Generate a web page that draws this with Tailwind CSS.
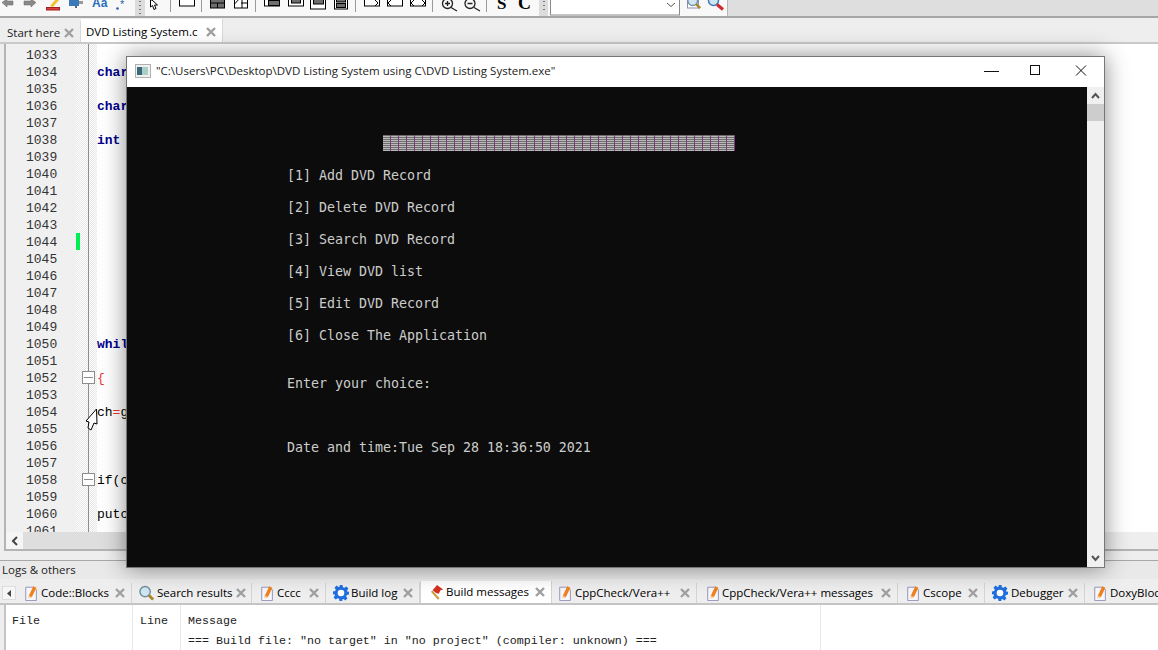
<!DOCTYPE html>
<html lang="en">
<head>
    <meta charset="UTF-8">
    <title>DVD Listing System.c - Code::Blocks</title>
    <script src="https://cdn.jsdelivr.net/npm/@tailwindcss/browser@4"></script>
</head>
<body class="relative w-[1158px] h-[650px] overflow-hidden bg-[#eeeeee] font-['Open_Sans',sans-serif] text-[11.5px] text-black">

    <!-- shared icons -->
    <svg class="hidden">
        <symbol id="close" viewBox="0 0 10 10">
            <path d="M1 1 9 9M9 1 1 9" stroke="#a0a0a0" stroke-width="2.400" fill="none"/>
        </symbol>
        <symbol id="doc" viewBox="0 0 14 18">
            <path d="M.5 2.500h9l3 3v12H.5z" fill="#f6f6fb" stroke="#8d8db5"/>
            <path d="M4 12 9 1.500l3.500 1.500-5 10.500L4 15z" fill="#f0801c"/>
            <path d="M4 12v3l3.500-1.500z" fill="#f7d9a8"/>
        </symbol>
        <symbol id="gear" viewBox="0 0 16 16">
            <path d="M6.500 0h3l.4 2.200 1.500.6L13.300 1.500l2.100 2.100-1.300 1.900.6 1.500L16 6.500v3l-2.200.4-.6 1.500 1.300 1.900-2.100 2.100-1.900-1.300-1.500.6L9.500 16h-3l-.4-2.200-1.500-.6-1.900 1.300L.6 12.400l1.300-1.900-.6-1.500L0 9.500v-3l2.200-.4.6-1.500L1.500 2.700 3.600.6l1.900 1.300 1.500-.6z" fill="#1f6fe0"/>
            <circle cx="8" cy="8" r="3.300" fill="#fff"/>
        </symbol>
        <symbol id="lens" viewBox="0 0 16 16">
            <circle cx="6.500" cy="6.500" r="5.500" fill="#cfe6f2" stroke="#6f8f9f" stroke-width="1.500"/>
            <path d="M10.500 10.500 15 15" stroke="#a8872a" stroke-width="3"/>
        </symbol>
        <symbol id="flag" viewBox="0 0 16 18">
            <path d="M3 7 8 1l7 5-3 1-2 4-3-1z" fill="#d5301f"/>
            <path d="M2 8l8 9" stroke="#c8a040" stroke-width="2.500"/>
        </symbol>
    </svg>

    <!-- toolbar, the icons are cut off by the top of the picture -->
    <div class="h-[18px] flex border-b-2 border-[#a6a6a6] bg-[#dedede]">
        <div class="w-[728px] h-[16px] bg-[#f8f8f8] border-r border-[#b8b8b8]">
            <svg width="728" height="16" viewBox="0 0 728 16">
                <path d="M2 2.500 7-1v2h6v4H7v2z" fill="#8a8a8a" stroke="#666" stroke-width=".5"/>
                <path d="M36 2.500 31-1v2h-7v4h7v2z" fill="#8a8a8a" stroke="#666" stroke-width=".5"/>
                <path d="M50 6 55 0h4l-6 7z" fill="#f2c230"/>
                <rect x="46.500" y="7.500" width="13" height="2.500" fill="#e04040" stroke="#a02020"/>
                <rect x="69" y="0" width="10" height="6" fill="#3a7ab8"/>
                <rect x="79" y="1" width="4" height="3" fill="#999"/>
                <path d="M76 6v2" stroke="#666" stroke-width="2"/>
                <text x="92" y="7" font-family="Liberation Sans" font-size="12" font-weight="bold" fill="#2a6fb8">Aa</text>
                <circle cx="117.500" cy="8.500" r="1.300" fill="#2a5fa8"/>
                <text x="120" y="8" font-family="Liberation Sans" font-size="11" fill="#2a5fa8">*</text>
                <rect x="135" y="0" width="10" height="16" fill="#dcdcdc"/>
                <path d="M140 1v1M140 5v1M140 9v1M140 13v1" stroke="#555" stroke-width="1.500"/>
                <path d="M150.500 0 150.500 7 152.500 5.500 154 9.500 156 8.500 154.500 5 157.500 5 152 0z" fill="#fff" stroke="#000"/>
                <path d="M170.500 0v12M201.500 0v12M255.500 0v12M355.500 0v12M432.500 0v12M486.500 0v12" stroke="#9a9a9a"/>
                <rect x="179.500" y="-4" width="15" height="10" fill="#fff" stroke="#000"/>
                <g stroke="#000" fill="#6e6e6e">
                    <rect x="210.500" y="-3" width="14" height="11"/>
                    <path d="M210.500 3h14M217.500 3v5" fill="none"/>
                    <rect x="234.500" y="-3" width="13" height="11" fill="#fff"/>
                    <path d="M234.500 4 241 -3h1v11M241 3h7" fill="none"/>
                    <rect x="264.500" y="-4" width="15" height="10" fill="#fff"/>
                    <rect x="268.500" y="0.500" width="11" height="5"/>
                    <rect x="288.500" y="-4" width="15" height="10" fill="#fff"/>
                    <rect x="291.500" y="-4" width="9" height="7"/>
                    <rect x="310.500" y="-4" width="15" height="13" fill="#fff"/>
                    <rect x="313.500" y="-2" width="10" height="6"/>
                    <rect x="334.500" y="-4" width="13" height="13" fill="#fff"/>
                    <rect x="336.500" y="-2" width="9" height="4"/>
                    <rect x="336.500" y="3.500" width="9" height="4"/>
                    <rect x="364.500" y="-4" width="15" height="10" fill="#fff"/>
                    <path d="M375 0l3 3-3 3" fill="none"/>
                    <rect x="387.500" y="-4" width="15" height="10" fill="#fff"/>
                    <path d="M391 0l-3 3 3 3" fill="none"/>
                    <rect x="410.500" y="-4" width="15" height="10" fill="#fff"/>
                    <path d="M414 0l-3 3 3 3M422 0l3 3-3 3" fill="none"/>
                </g>
                <g fill="none" stroke="#222" stroke-width="1.300">
                    <circle cx="447.500" cy="3.500" r="5"/>
                    <path d="M451 7.500 457 11M445 3.500h5M447.500 1v5"/>
                    <circle cx="470" cy="3.500" r="5"/>
                    <path d="M474 7.500 480 11M467.500 3.500h5"/>
                </g>
                <text x="497" y="9" font-family="Liberation Serif" font-size="17" font-weight="bold">S</text>
                <text x="518" y="9" font-family="Liberation Serif" font-size="18" font-weight="bold">C</text>
                <rect x="539" y="0" width="9" height="16" fill="#dcdcdc"/>
                <path d="M544 1v1M544 5v1M544 9v1" stroke="#555" stroke-width="1.500"/>
                <rect x="550.500" y="-3" width="129" height="18" fill="#fff" stroke="#8a8a8a"/>
                <path d="M667 3l4 3.500 4-3.500" fill="none" stroke="#555"/>
                <rect x="687.500" y="-3" width="11" height="11" fill="#fff" stroke="#8d8db5"/>
                <use href="#lens" x="687" y="-5" width="14" height="14"/>
                <circle cx="713.500" cy="0.500" r="5" fill="#cfe6f2" stroke="#3a7ab8" stroke-width="1.500"/>
                <path d="M717 4.500l6 5" stroke="#d02828" stroke-width="3"/>
            </svg>
        </div>
    </div>

    <!-- editor tabs -->
    <div class="h-[26px] pl-[3px] flex items-end border-b-2 border-[#c9c9c9]">
        <div class="w-[78px] h-[21px] pl-1 pr-[6px] pt-[2px] flex items-center justify-between border-r border-[#d8d8d8] text-[#222]">
            <span>Start here</span>
            <svg class="w-[10px] h-[10px] shrink-0"><use href="#close"/></svg>
        </div>
        <div class="w-[142px] h-[23px] pl-[5px] pr-[6px] pt-[2px] flex items-center justify-between bg-white border-r border-[#d8d8d8]">
            <span>DVD Listing System.c</span>
            <svg class="w-[10px] h-[10px] shrink-0"><use href="#close"/></svg>
        </div>
    </div>

    <!-- code editor -->
    <div class="h-[507px] ml-1 flex flex-col bg-white border-l-2 border-b-2 border-[#b4b4b4]">
        <div class="relative h-[488px] flex overflow-hidden font-['Liberation_Mono',monospace] text-[13px] leading-[17px]">
            <pre class="w-[70px] pt-[3px] pl-5 bg-[#f0f0f0] text-[#333] font-['Liberation_Mono',monospace]">1033
1034
1035
1036
1037
1038
1039
1040
1041
1042
1043
1044
1045
1046
1047
1048
1049
1050
1051
1052
1053
1054
1055
1056
1057
1058
1059
1060
1061</pre>
            <div class="relative w-[21px] bg-[repeating-conic-gradient(#e6e6e6_0_25%,#ffffff_0_50%)] bg-[length:2px_2px]">
                <div class="absolute left-0 top-[189px] w-1 h-[17px] bg-[#00ee55]"></div>
                <div class="absolute left-3 top-0 bottom-0 w-px bg-[#8c8c8c]"></div>
                <div class="absolute left-[6px] top-[327px] w-[13px] h-[13px] border border-[#8c8c8c] bg-white flex items-center justify-center"><div class="w-[9px] h-px bg-[#8c8c8c]"></div></div>
                <div class="absolute left-[6px] top-[429px] w-[13px] h-[13px] border border-[#8c8c8c] bg-white flex items-center justify-center"><div class="w-[9px] h-px bg-[#8c8c8c]"></div></div>
            </div>
            <pre class="flex-1 pt-[3px] font-['Liberation_Mono',monospace]">

<b class="text-[#00008b]">char</b>

<b class="text-[#00008b]">char</b>

<b class="text-[#00008b]">int</b>











<b class="text-[#00008b]">whil</b>

<span class="text-[#f03030]">{</span>

ch<span class="text-[#f03030]">=</span>g



if(c

putc</pre>
            <!-- mouse pointer -->
            <svg class="absolute left-[79px] top-[364px]" width="14" height="24" viewBox="0 0 14 24">
                <path d="M11.500 1 1 13l3 1-1 6 3 2 3-7 3 1z" fill="#fff" stroke="#000"/>
            </svg>
        </div>
        <div class="h-[17px] flex bg-[#eeeeee]">
            <div class="w-[17px] flex items-center justify-center bg-[#f5f5f5]">
                <svg width="8" height="10" viewBox="0 0 8 10"><path d="M6 1 2 5l4 4" fill="none" stroke="#444" stroke-width="2"/></svg>
            </div>
            <div class="w-[980px] bg-[#dedede]"></div>
        </div>
    </div>

    <!-- sash and logs caption -->
    <div class="h-[10px] border-b border-[#a8a8a8]"></div>
    <div class="h-[18px] pl-[2px] flex items-center text-[#222] bg-[#e9e9e9]">Logs &amp; others</div>

    <!-- logs tabs -->
    <div class="h-[26px] flex items-end border-b-2 border-[#c4c4c4] bg-[#eeeeee] overflow-hidden whitespace-nowrap">
        <div class="w-[22px] h-[20px] flex items-center shrink-0">
            <div class="ml-[2px] w-[14px] h-[14px] flex items-center justify-center bg-[#f6f6f6] border border-[#dddddd]">
                <svg width="5" height="7" viewBox="0 0 5 7"><path d="M4 0v7L0 3.500z" fill="#444"/></svg>
            </div>
        </div>
        <div class="w-[110px] h-[20px] pl-[3px] pr-[6px] flex items-center gap-[3px] border-r border-[#d4d4d4] shrink-0">
            <svg class="w-[13px] h-4 shrink-0"><use href="#doc"/></svg><span class="flex-1">Code::Blocks</span>
            <svg class="w-[10px] h-[10px] shrink-0"><use href="#close"/></svg>
        </div>
        <div class="w-[120px] h-[20px] pl-[7px] pr-[6px] flex items-center gap-[3px] border-r border-[#d4d4d4] shrink-0">
            <svg class="w-[15px] h-4 shrink-0"><use href="#lens"/></svg><span class="flex-1">Search results</span>
            <svg class="w-[10px] h-[10px] shrink-0"><use href="#close"/></svg>
        </div>
        <div class="w-[74px] h-[20px] pl-[9px] pr-[6px] flex items-center gap-[3px] border-r border-[#d4d4d4] shrink-0">
            <svg class="w-[13px] h-4 shrink-0"><use href="#doc"/></svg><span class="flex-1">Cccc</span>
            <svg class="w-[10px] h-[10px] shrink-0"><use href="#close"/></svg>
        </div>
        <div class="w-[94px] h-[20px] pl-[7px] pr-[6px] flex items-center gap-[2px] border-r border-[#d4d4d4] shrink-0">
            <svg class="w-4 h-4 shrink-0"><use href="#gear"/></svg><span class="flex-1">Build log</span>
            <svg class="w-[10px] h-[10px] shrink-0"><use href="#close"/></svg>
        </div>
        <div class="w-[132px] h-[22px] pl-[9px] pr-[6px] flex items-center gap-[2px] bg-white border-x border-[#d4d4d4] shrink-0">
            <svg class="w-[14px] h-4 shrink-0"><use href="#flag"/></svg><span class="flex-1">Build messages</span>
            <svg class="w-[10px] h-[10px] shrink-0"><use href="#close"/></svg>
        </div>
        <div class="w-[145px] h-[20px] pl-[7px] pr-[6px] flex items-center gap-[3px] border-r border-[#d4d4d4] shrink-0">
            <svg class="w-[13px] h-4 shrink-0"><use href="#doc"/></svg><span class="flex-1">CppCheck/Vera++</span>
            <svg class="w-[10px] h-[10px] shrink-0"><use href="#close"/></svg>
        </div>
        <div class="w-[201px] h-[20px] pl-[10px] pr-[6px] flex items-center gap-[2px] border-r border-[#d4d4d4] shrink-0">
            <svg class="w-[13px] h-4 shrink-0"><use href="#doc"/></svg><span class="flex-1">CppCheck/Vera++ messages</span>
            <svg class="w-[10px] h-[10px] shrink-0"><use href="#close"/></svg>
        </div>
        <div class="w-[87px] h-[20px] pl-[9px] pr-[6px] flex items-center gap-[3px] border-r border-[#d4d4d4] shrink-0">
            <svg class="w-[13px] h-4 shrink-0"><use href="#doc"/></svg><span class="flex-1">Cscope</span>
            <svg class="w-[10px] h-[10px] shrink-0"><use href="#close"/></svg>
        </div>
        <div class="w-[100px] h-[20px] pl-[7px] pr-[6px] flex items-center gap-[3px] border-r border-[#d4d4d4] shrink-0">
            <svg class="w-4 h-4 shrink-0"><use href="#gear"/></svg><span class="flex-1">Debugger</span>
            <svg class="w-[10px] h-[10px] shrink-0"><use href="#close"/></svg>
        </div>
        <div class="w-[90px] h-[20px] pl-[9px] flex items-center gap-[3px] shrink-0">
            <svg class="w-[13px] h-4 shrink-0"><use href="#doc"/></svg><span>DoxyBlocks</span>
        </div>
    </div>

    <!-- build messages list -->
    <div class="h-[45px] ml-1 flex bg-white border-l-2 border-[#c4c4c4] font-['Liberation_Mono',monospace] text-[11.67px] leading-[20px] text-[#222] overflow-hidden">
        <div class="w-[127px] pl-[6px] pt-[6px] border-r border-[#e8e8e8]">File</div>
        <div class="w-[48px] pl-[7px] pt-[6px] border-r border-[#e8e8e8]">Line</div>
        <div class="w-[640px] pl-[7px] pt-[6px] border-r border-[#e8e8e8] whitespace-pre">Message
=== Build file: "no target" in "no project" (compiler: unknown) ===</div>
    </div>

    <!-- console window floats over the IDE -->
    <div class="absolute left-[126px] top-[56px] w-[979px] h-[512px] flex flex-col border border-[#777777] bg-white shadow-[0_0_22px_rgba(0,0,0,0.45)]">
        <div class="h-[30px] shrink-0 pb-[2px] flex items-center">
            <svg class="ml-[8px]" width="16" height="14" viewBox="0 0 16 14">
                <rect x="0.500" y="0.500" width="15" height="13" fill="#f0f0f0" stroke="#b0b0b0"/>
                <rect x="2" y="3" width="5" height="8" fill="#3a6a7a"/>
                <rect x="7" y="3" width="6" height="8" fill="#a8d0c8"/>
            </svg>
            <span class="ml-[5px] flex-1 text-[#222]">"C:\Users\PC\Desktop\DVD Listing System using C\DVD Listing System.exe"</span>
            <svg class="mr-[14px]" width="106" height="14" viewBox="0 0 106 14">
                <path d="M0 7.500h15" stroke="#111"/>
                <rect x="46.500" y="1.500" width="9" height="9" fill="none" stroke="#111"/>
                <path d="M92 1.500 102 11.500M102 1.500 92 11.500" stroke="#111" fill="none"/>
            </svg>
        </div>
        <div class="flex-1 flex min-h-0">
            <div class="flex-1 bg-[#0c0c0c] text-[#cccccc] font-['DejaVu_Sans_Mono',monospace] text-[13.29px] leading-[16px] pl-[160px] overflow-hidden">
                <div class="mt-[48px] mb-[17px] ml-[96px] w-[352px] h-4 bg-[repeating-linear-gradient(90deg,#0000_0_7px,#7a3a7a_7px_8px),repeating-linear-gradient(0deg,#bcbcbc_0_1px,#6c6c6c_1px_2px)]"></div>
                <pre class="font-['DejaVu_Sans_Mono',monospace]">[1] Add DVD Record

[2] Delete DVD Record

[3] Search DVD Record

[4] View DVD list

[5] Edit DVD Record

[6] Close The Application


Enter your choice:



Date and time:Tue Sep 28 18:36:50 2021</pre>
            </div>
            <div class="w-[17px] shrink-0 flex flex-col bg-[#f0f0f0]">
                <div class="h-[17px] flex items-center justify-center">
                    <svg width="9" height="7" viewBox="0 0 9 7"><path d="M1 6l3.500-4L8 6" fill="none" stroke="#555" stroke-width="2"/></svg>
                </div>
                <div class="h-[17px] bg-[#cdcdcd]"></div>
                <div class="flex-1"></div>
                <div class="h-[17px] flex items-center justify-center">
                    <svg width="9" height="7" viewBox="0 0 9 7"><path d="M1 1l3.500 4L8 1" fill="none" stroke="#555" stroke-width="2"/></svg>
                </div>
            </div>
        </div>
    </div>
</body>
</html>
